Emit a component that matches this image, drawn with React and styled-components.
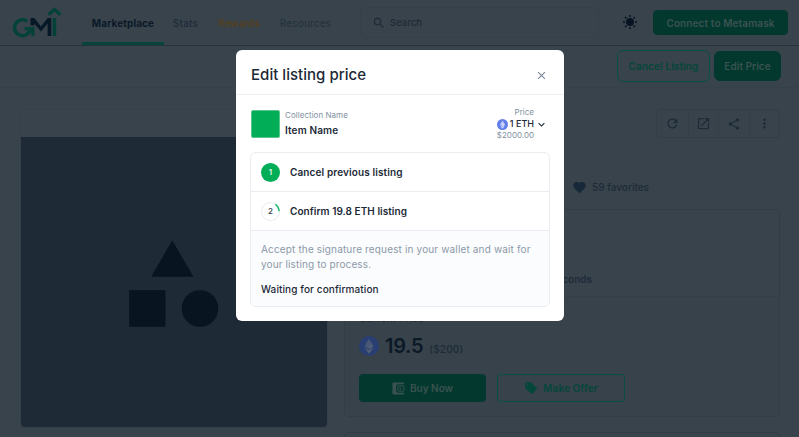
import React from "react";
import styled, { createGlobalStyle } from "styled-components";
import {
  MdSearch, MdRefresh, MdOpenInNew, MdShare, MdMoreVert, MdFavorite,
  MdLocalOffer, MdClose, MdExpandMore,
} from "react-icons/md";

const c = {
  page: "#38434b",
  line: "#34404a",
  ink: "#0b1927",
  muted: "#1d2b38",
  faint: "#25333f",
  green: "#03382f",
  teal: "#07503f",
  tile: "#1e2b37",
};

const Global = createGlobalStyle`
  * { box-sizing: border-box; }
  body { margin: 0; background: ${c.page}; font-family: Inter, "Liberation Sans", sans-serif; }
  svg { display: block; flex: none; }
`;

const Page = styled.div`
  width: 799px;
  height: 437px;
  overflow: hidden;
  background: ${c.page};
  color: ${c.ink};
`;

const Label = styled.span`
  font-size: ${(p) => p.$size || 10}px;
  line-height: ${(p) => p.$lh || 14}px;
  font-weight: ${(p) => p.$weight || 500};
  letter-spacing: ${(p) => p.$track || 0}px;
  color: ${(p) => p.$color || "inherit"};
  white-space: nowrap;
`;

const Header = styled.header`
  display: flex;
  height: 46px;
  border-bottom: 1px solid #26333e;
  padding-left: 12px;
`;
const LogoBox = styled.div`
  width: 70px;
  padding-top: 6px;
`;
const Tab = styled.a`
  display: flex;
  align-items: center;
  justify-content: center;
  width: ${(p) => p.$w}px;
  height: 45px;
  padding-top: 3px;
  border-bottom: 3px solid ${(p) => (p.$active ? "#064537" : "transparent")};
`;
const Search = styled.div`
  display: flex;
  align-items: center;
  gap: 4px;
  width: 239px;
  height: 31px;
  margin: 7px 0 0 20px;
  padding-left: 11px;
  border: 1px solid ${c.line};
  border-radius: 5px;
  color: ${c.muted};
`;
const SunBox = styled.div`
  display: grid;
  place-items: center;
  width: 18px;
  height: 44px;
  margin-left: 22px;
`;
const Button = styled.button`
  display: flex;
  align-items: center;
  justify-content: center;
  gap: ${(p) => p.$gap || 0}px;
  width: ${(p) => p.$w}px;
  height: ${(p) => p.$h}px;
  padding: 0;
  border: 1px solid ${(p) => (p.$outline ? c.teal : c.green)};
  border-radius: ${(p) => p.$r || 4}px;
  background: ${(p) => (p.$outline ? "transparent" : c.green)};
  color: ${(p) => (p.$outline ? "#04463a" : "#3a5350")};
  font-family: inherit;
`;
const ConnectSlot = styled.div`
  margin: 10px 0 0 14px;
`;
const ActionBar = styled.div`
  display: flex;
  align-items: center;
  justify-content: flex-end;
  gap: 4px;
  height: 42px;
  padding: 0 18px 2px 0;
  border-bottom: 1px solid ${c.line};
`;

const Content = styled.main`
  display: flex;
  align-items: flex-start;
  gap: 16px;
  padding: 21px 19px 0 20px;
`;
const Artwork = styled.section`
  width: 308px;
  height: 319px;
  border: 1px solid ${c.line};
  border-radius: 5px;
  overflow: hidden;
`;
const Canvas = styled.div`
  margin: 27px -1px -1px;
  height: 291px;
  background: ${c.tile};
`;
const Details = styled.section`
  width: 436px;
`;
const Tools = styled.div`
  display: grid;
  grid-template-columns: repeat(4, 1fr);
  width: 124px;
  height: 29px;
  margin-left: auto;
  border: 1px solid #323e48;
  border-radius: 4px;
`;
const Tool = styled.div`
  display: grid;
  place-items: center;
  color: ${c.muted};
  & + & { border-left: 1px solid #333f49; }
`;
const Favorites = styled.div`
  display: flex;
  align-items: center;
  gap: 5px;
  height: 16px;
  margin: 41px 0 14px 228px;
  color: #172838;
`;
const SaleCard = styled.div`
  height: 208px;
  border: 1px solid #323d47;
  border-radius: 5px;
`;
const SaleEnd = styled.div`
  height: 87px;
  padding: 60px 187px 0 0;
  line-height: 14px;
  text-align: right;
  border-bottom: 1px solid #343f49;
`;
const Offer = styled.div`
  height: 119px;
  padding: 12px 0 0 14px;
  background: #37424b;
`;
const Caption = styled.div`
  line-height: 14px;
`;
const PriceRow = styled.div`
  display: flex;
  align-items: center;
  height: 24px;
  margin: 9px 0 16px;
`;
const Amount = styled.div`
  display: flex;
  align-items: baseline;
  gap: 6px;
  margin-left: 6px;
`;
const OfferButtons = styled.div`
  display: flex;
  gap: 11px;
`;
const NextCard = styled.div`
  height: 40px;
  margin-top: 15px;
  border: 1px solid #323d47;
  border-radius: 5px;
`;

const Overlay = styled.div`
  position: fixed;
  inset: 0;
  display: flex;
  align-items: flex-start;
  padding: 50px 0 0 236px;
`;
const Dialog = styled.div`
  width: 328px;
  height: 271px;
  border-radius: 6px;
  background: #fff;
  color: #1c2936;
`;
const DialogHead = styled.div`
  display: flex;
  align-items: center;
  justify-content: space-between;
  height: 45px;
  padding: 6px 16px 0 15px;
  border-bottom: 1px solid #edf0f3;
`;
const Item = styled.div`
  display: flex;
  height: 57px;
  padding: 15px 16px 0 15px;
`;
const Thumb = styled.div`
  width: 29px;
  height: 28px;
  border-radius: 2px;
  border: 1px solid #54c68b;
  background: #02ad57;
`;
const Names = styled.div`
  display: flex;
  flex-direction: column;
  gap: 2px;
  margin: -1px auto 0 5px;
`;
const Price = styled.div`
  display: grid;
  grid-template-columns: auto 14px;
  justify-items: end;
  align-items: center;
  grid-template-rows: 11px 12px 10px;
  margin-top: -3px;
`;
const Eth = styled.div`
  display: flex;
  align-items: center;
  gap: 2px;
`;
const Steps = styled.div`
  width: 300px;
  height: 155px;
  margin-left: 14px;
  border: 1px solid #e9edf2;
  border-radius: 6px;
  overflow: hidden;
`;
const Step = styled.div`
  display: flex;
  align-items: center;
  gap: 10px;
  height: 39px;
  padding-left: 10px;
  border-bottom: 1px solid #e9edf1;
`;
const Badge = styled.div`
  display: grid;
  place-items: center;
  width: 19px;
  height: 19px;
  border-radius: 50%;
  background: #02ad57;
  color: #e4f8ed;
`;
const Pending = styled(Badge)`
  background: none;
  color: #35414d;
  & > * { grid-area: 1 / 1; }
`;
const Note = styled.div`
  display: flex;
  flex-direction: column;
  height: 77px;
  padding: 11px 0 0 10px;
  background: #fbfcfe;
`;
const Status = styled.div`
  display: flex;
  margin-top: 10px;
`;

const Logo = () => (
  <svg width="50" height="32" viewBox="12 6 50 32" fill="none">
    <path d="M27.300 21.300A8 8 0 1 0 28 33.500" stroke="#034238" strokeWidth="3.400" />
    <path d="M24.500 27H34.500V36H31.200V32.500L28 35.200L25.800 32.600L28.500 30.200H24.500z" fill="#034238" />
    <path d="M30.500 25.500V18H34.200L41 26.500L47.600 18H51.200V36H47.600V23.600L41 31.500L34.200 23.600V25.500z" fill="#071827" />
    <path d="M54.400 18V36" stroke="#034238" strokeWidth="3.600" />
    <path d="M48.600 14.700L54.500 9.400L60.400 14.700" stroke="#034238" strokeWidth="3.200" />
  </svg>
);

const Sun = () => (
  <svg width="16" height="16" viewBox="0 0 16 16">
    <circle cx="8" cy="8" r="4" fill="#071522" />
    {[0, 45, 90, 135, 180, 225, 270, 315].map((a) => (
      <rect key={a} x="7.2" y="1" width="1.6" height="1.9" fill="#071522" transform={`rotate(${a} 8 8)`} />
    ))}
  </svg>
);

const EthCoin = ({ size, fill, mark }) => (
  <svg width={size} height={size} viewBox="0 0 20 20">
    <circle cx="10" cy="10" r="10" fill={fill} />
    <path d="M10 2.7l4.6 7.5L10 13l-4.6-2.8z" fill={mark} opacity=".75" />
    <path d="M10 8.1l4.6 2.1L10 13zM10 14.1l4.6-2.7L10 17.7l-4.6-6.3z" fill={mark} />
  </svg>
);

const Wallet = () => (
  <svg width="13" height="13" viewBox="0 0 13 13">
    <path d="M1.500.5h9.500q1 0 1 1v.8H6.300q-2.300 0-2.300 2.200v4q0 2.200 2.300 2.200H12v.8q0 1-1 1H1.500q-1 0-1-1v-10q0-1 1-1z" fill="#3a5350" />
    <rect x="5.800" y="3.900" width="6.200" height="5.200" rx=".6" fill="none" stroke="#3a5350" strokeWidth="1" />
    <circle cx="8.300" cy="6.500" r=".9" fill="#3a5350" />
  </svg>
);

const Shapes = () => (
  <svg width="308" height="291" viewBox="20 137 308 291" fill="#081520">
    <path d="M172.300 241.200L192.700 276.200H152z" stroke="#081520" strokeWidth="1" strokeLinejoin="round" />
    <rect x="129.200" y="290.200" width="36.300" height="36.600" />
    <circle cx="200" cy="308.500" r="18.300" />
  </svg>
);

export default function App() {
  return (
    <>
      <Global />
      <Page>
        <Header>
          <LogoBox><Logo /></LogoBox>
          <Tab $w={82} $active><Label $weight={700} $track={0.1}>Marketplace</Label></Tab>
          <Tab $w={43}><Label $weight={500} $track={0.2} $color={c.muted}>Stats</Label></Tab>
          <Tab $w={64}><Label $weight={600} $track={-0.05} $color="#54401f">Rewards</Label></Tab>
          <Tab $w={69}><Label $weight={500} $track={0.12} $color={c.faint}>Resources</Label></Tab>
          <Search>
            <MdSearch size={14} />
            <Label $size={9.5}>Search</Label>
          </Search>
          <SunBox><Sun /></SunBox>
          <ConnectSlot><Button $w={135} $h={25}><Label $weight={600} $track={0.12}>Connect to Metamask</Label></Button></ConnectSlot>
        </Header>
        <ActionBar>
          <Button $outline $w={93} $h={32} $r={6}><Label $weight={600} $track={0.1}>Cancel Listing</Label></Button>
          <Button $w={67} $h={30} $r={6}><Label $weight={600} $track={0.05}>Edit Price</Label></Button>
        </ActionBar>
        <Content>
          <Artwork><Canvas><Shapes /></Canvas></Artwork>
          <Details>
            <Tools>
              <Tool><MdRefresh size={15} /></Tool>
              <Tool><MdOpenInNew size={15} /></Tool>
              <Tool><MdShare size={14} /></Tool>
              <Tool><MdMoreVert size={15} /></Tool>
            </Tools>
            <Favorites>
              <MdFavorite size={15} />
              <Label $color={c.muted}>59 favorites</Label>
            </Favorites>
            <SaleCard>
              <SaleEnd><Label $color={c.muted} $weight={600}>Sale ends in 59 seconds</Label></SaleEnd>
              <Offer>
                <Caption><Label $color={c.muted} $track={0.1}>Current Price</Label></Caption>
                <PriceRow>
                  <EthCoin size={20} fill="#293e72" mark="#526077" />
                  <Amount>
                    <Label $size={20} $weight={600} $lh={24} $track={-0.3}>19.5</Label>
                    <Label $color={c.muted} $weight={500} $track={0.2}>($200)</Label>
                  </Amount>
                </PriceRow>
                <OfferButtons>
                  <Button $w={127} $h={28} $gap={5}><Wallet /><Label $weight={600}>Buy Now</Label></Button>
                  <Button $outline $w={128} $h={28} $gap={5}><MdLocalOffer size={14} /><Label $weight={600} $track={0.1}>Make Offer</Label></Button>
                </OfferButtons>
              </Offer>
            </SaleCard>
            <NextCard />
          </Details>
        </Content>
      </Page>
      <Overlay>
        <Dialog>
          <DialogHead>
            <Label $size={15} $lh={20} $track={0.03}>Edit listing price</Label>
            <MdClose size={13} color="#788594" />
          </DialogHead>
          <Item>
            <Thumb />
            <Names>
              <Label $size={8} $lh={12} $weight={400} $track={0.04} $color="#8290a0">Collection Name</Label>
              <Label $weight={600} $track={0.13}>Item Name</Label>
            </Names>
            <Price>
              <Label $size={8} $lh={11} $weight={400} $color="#8290a0">Price</Label><span />
              <Eth>
                <EthCoin size={11} fill="#627eea" mark="#dce4ff" />
                <Label $size={9} $lh={12} $weight={500}>1 ETH</Label>
              </Eth>
              <MdExpandMore size={13} />
              <Label $size={8} $lh={10} $weight={400} $color="#8290a0">$2000.00</Label>
            </Price>
          </Item>
          <Steps>
            <Step>
              <Badge><Label $size={8} $weight={600}>1</Label></Badge>
              <Label $weight={600} $track={0.12}>Cancel previous listing</Label>
            </Step>
            <Step>
              <Pending>
                <svg width="19" height="19" viewBox="0 0 19 19" fill="none">
                  <circle cx="9.500" cy="9.500" r="9" stroke="#e8ebee" />
                  <path d="M14.300 2.300A8.500 8.500 0 0 1 18 9.300" stroke="#20bd70" strokeWidth="1.600" />
                </svg>
                <Label $size={8} $weight={500}>2</Label>
              </Pending>
              <Label $weight={600} $track={0.05}>Confirm 19.8 ETH listing</Label>
            </Step>
            <Note>
              <Label $lh={15} $weight={400} $track={0.15} $color="#8c99a8">Accept the signature request in your wallet and wait for</Label>
              <Label $lh={15} $weight={400} $track={0.12} $color="#8c99a8">your listing to process.</Label>
              <Status><Label $lh={15} $weight={450} $track={0.1}>Waiting for confirmation</Label></Status>
            </Note>
          </Steps>
        </Dialog>
      </Overlay>
    </>
  );
}
